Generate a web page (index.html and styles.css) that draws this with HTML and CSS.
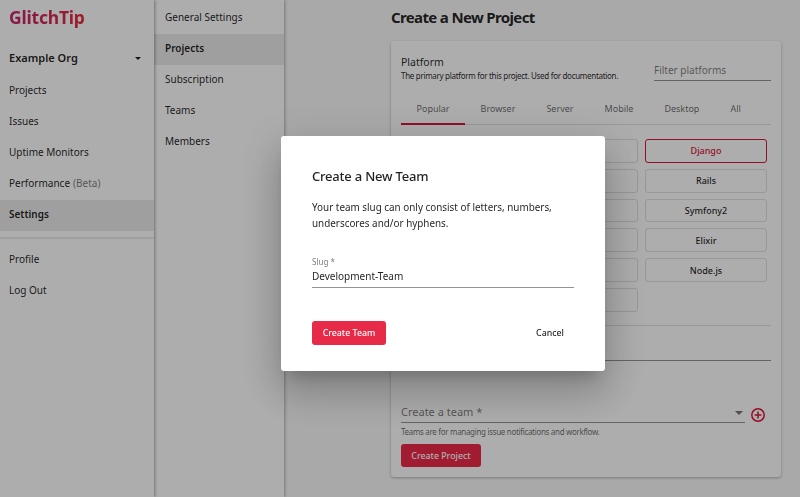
FILE: index.html
```html
<!DOCTYPE html>
<html lang="en">
<head>
<meta charset="utf-8">
<title>GlitchTip</title>
<link rel="stylesheet" href="styles.css">
</head>
<body>
<div class="app">
  <aside class="sidebar">
    <div class="logo">GlitchTip</div>
    <div class="org"><span>Example Org</span><i class="caret"></i></div>
    <nav class="nav">
      <a class="nav-item">Projects</a>
      <a class="nav-item">Issues</a>
      <a class="nav-item">Uptime Monitors</a>
      <a class="nav-item">Performance <span class="muted">(Beta)</span></a>
      <a class="nav-item active">Settings</a>
    </nav>
    <hr class="nav-rule">
    <nav class="nav nav-lower">
      <a class="nav-item">Profile</a>
      <a class="nav-item">Log Out</a>
    </nav>
  </aside>
  <aside class="subnav">
    <a class="nav-item">General Settings</a>
    <a class="nav-item active">Projects</a>
    <a class="nav-item">Subscription</a>
    <a class="nav-item">Teams</a>
    <a class="nav-item">Members</a>
  </aside>
  <main class="main">
    <h1 class="page-title">Create a New Project</h1>
    <section class="card">
      <div class="platform-head">
        <div>
          <div class="platform-title">Platform</div>
          <div class="hint">The primary platform for this project. Used for documentation.</div>
        </div>
        <div class="filter">Filter platforms</div>
      </div>
      <div class="tabs">
        <span class="tab tab-active">Popular</span>
        <span class="tab">Browser</span>
        <span class="tab">Server</span>
        <span class="tab">Mobile</span>
        <span class="tab">Desktop</span>
        <span class="tab">All</span>
      </div>
      <div class="platforms">
        <span class="chip"></span><span class="chip chip-selected">Django</span>
        <span class="chip"></span><span class="chip">Rails</span>
        <span class="chip"></span><span class="chip">Symfony2</span>
        <span class="chip"></span><span class="chip">Elixir</span>
        <span class="chip"></span><span class="chip">Node.js</span>
        <span class="chip"></span>
      </div>
      <hr class="card-rule">
      <div class="name-field"></div>
      <div class="team-row">
        <div class="team-select"><span>Create a team *</span><i class="caret caret-grey"></i></div>
        <svg class="plus" width="16" height="16" viewBox="0 0 16 16" aria-hidden="true"><circle cx="8" cy="8" r="6.2" fill="none" stroke="#dc143c" stroke-width="1.5"/><path d="M8 4.6v6.8M4.6 8h6.8" stroke="#dc143c" stroke-width="1.5" fill="none"/></svg>
      </div>
      <div class="team-help">Teams are for managing issue notifications and workflow.</div>
      <button class="btn btn-project">Create Project</button>
    </section>
  </main>
</div>
<div class="backdrop">
  <div class="dialog">
    <h2 class="dialog-title">Create a New Team</h2>
    <p class="dialog-text">Your team slug can only consist of letters, numbers, underscores and/or hyphens.</p>
    <div class="slug-field">
      <div class="slug-label">Slug *</div>
      <div class="slug-value">Development-Team</div>
    </div>
    <div class="dialog-actions">
      <button class="btn btn-team">Create Team</button>
      <button class="btn-plain">Cancel</button>
    </div>
  </div>
</div>
</body>
</html>
```
FILE: styles.css
```css
* { box-sizing: border-box; }
html, body { margin: 0; height: 100%; overflow: hidden; }
body { font-family: "Noto Sans", sans-serif; color: rgba(0,0,0,.87); background: #fafafa; }
.app { display: flex; height: 497px; }

.sidebar { width: 154px; background: #fff; box-shadow: 1px 0 3px rgba(0,0,0,.35); position: relative; z-index: 2; }
.logo { font-weight: 700; font-size: 17.5px; letter-spacing: -.2px; line-height: 24px; padding: 5px 0 0 9px; height: 40px;
  background: linear-gradient(90deg, #c4246f 9px, #e8283c 84px); -webkit-background-clip: text; background-clip: text; color: transparent; }
.org { display: flex; justify-content: space-between; align-items: center; height: 36px; padding: 0 13px 2px 9px; font-weight: 600; font-size: 11px; }
.caret { width: 0; height: 0; border-left: 3px solid transparent; border-right: 3px solid transparent; border-top: 3px solid rgba(0,0,0,.87); margin-top: 3px; }
.caret-grey { border-left-width: 4px; border-right-width: 4px; border-top-width: 4px; border-top-color: rgba(0,0,0,.54); }
.nav { display: flex; flex-direction: column; }
.nav-item { display: flex; align-items: center; gap: 3px; height: 31px; padding: 0 0 4px 9px; font-size: 10px; white-space: nowrap; }
.nav-item.active { background: rgba(0,0,0,.08); font-weight: 600; }
.muted { color: rgba(0,0,0,.54); }
.nav-rule { margin: 6px 0 6px; border: 0; border-top: 2px solid rgba(0,0,0,.08); }

.subnav { width: 130px; background: #fff; box-shadow: 1px 0 3px rgba(0,0,0,.3); position: relative; z-index: 1; padding-top: 3px; }
.subnav .nav-item { padding-left: 11px; }

.main { flex: 1; padding: 0 19px 0 107px; min-width: 0; }
.page-title { margin: 0; font-size: 15px; letter-spacing: -.65px; line-height: 20px; padding-top: 7px; height: 41px; font-weight: 700; }
.card { height: 436px; background: #fff; border-radius: 3px; box-shadow: 0 1px 3px rgba(0,0,0,.3); padding: 14px 10px 0; }
.platform-head { display: flex; justify-content: space-between; height: 40px; }
.platform-title { font-size: 10.5px; line-height: 15px; }
.hint { font-size: 8px; letter-spacing: -.3px; line-height: 12px; }
.filter { width: 117px; height: 26px; padding-top: 8px; font-size: 10px; line-height: 15px; color: rgba(0,0,0,.54); border-bottom: 1px solid rgba(0,0,0,.42); }
.tabs { display: flex; height: 31px; margin-top: -1px; border-bottom: 1px solid rgba(0,0,0,.12); font-size: 9px; color: rgba(0,0,0,.6); }
.tab { padding: 0 15.5px; line-height: 29px; }
.tab-active { border-bottom: 2px solid #dc143c; height: 31px; margin-bottom: -1px; }
.platforms { display: grid; grid-template-columns: 122px 122px; grid-auto-rows: 23.8px; gap: 6px 7px; justify-content: end; padding-right: 4px; margin-top: 14px; height: 173px; }
.chip { display: flex; align-items: center; justify-content: center; border: 1px solid rgba(0,0,0,.12); border-radius: 3px; font-size: 9px; font-weight: 500; }
.chip-selected { color: #dc143c; border-color: #dc143c; }
.card-rule { margin: 13px 0 0; border: 0; border-top: 1px solid rgba(0,0,0,.12); }
.name-field { height: 35px; border-bottom: 1px solid rgba(0,0,0,.42); }
.team-row { display: flex; align-items: flex-end; gap: 5px; padding-right: 5px; height: 62px; }
.team-select { flex: 1; display: flex; justify-content: space-between; align-items: center; height: 23px; font-size: 11px; color: rgba(0,0,0,.54); border-bottom: 1px solid rgba(0,0,0,.42); padding-right: 2px; }
.plus { margin-bottom: 0; }
.team-help { font-size: 8px; letter-spacing: -.32px; line-height: 11px; margin-top: 3px; color: rgba(0,0,0,.6); }
.btn { border: 0; color: #fff; font-family: inherit; font-size: 8.8px; font-weight: 500; border-radius: 3px; padding: 0; }
.btn-project { display: block; width: 80px; height: 23px; margin-top: 7px; background: #ee2a48; }

.backdrop { position: fixed; inset: 0; background: rgba(0,0,0,.32); z-index: 5; display: flex; align-items: flex-start; justify-content: flex-start; padding: 136px 0 0 281px; }
.dialog { width: 324px; height: 235px; background: #fff; border-radius: 3px; padding: 31px; box-shadow: 0 11px 15px -7px rgba(0,0,0,.2), 0 24px 38px 3px rgba(0,0,0,.14), 0 9px 46px 8px rgba(0,0,0,.12); }
.dialog-title { margin: 0; font-size: 13px; letter-spacing: -.2px; line-height: 19px; font-weight: 500; }
.dialog-text { margin: 13px 0 0; font-size: 9.9px; line-height: 16px; }
.slug-field { margin-top: 26px; width: 262px; border-bottom: 1px solid rgba(0,0,0,.42); height: 31px; }
.slug-label { font-size: 8px; line-height: 10px; color: rgba(0,0,0,.54); }
.slug-value { font-size: 10px; line-height: 15px; margin-top: 2px; }
.dialog-actions { display: flex; justify-content: space-between; align-items: center; width: 262px; margin-top: 33px; }
.btn-team { width: 74px; height: 24px; background: #e62a47; }
.btn-plain { border: 0; background: none; font-family: inherit; font-size: 8.8px; font-weight: 500; color: rgba(0,0,0,.87); padding: 0 10px; }
```
